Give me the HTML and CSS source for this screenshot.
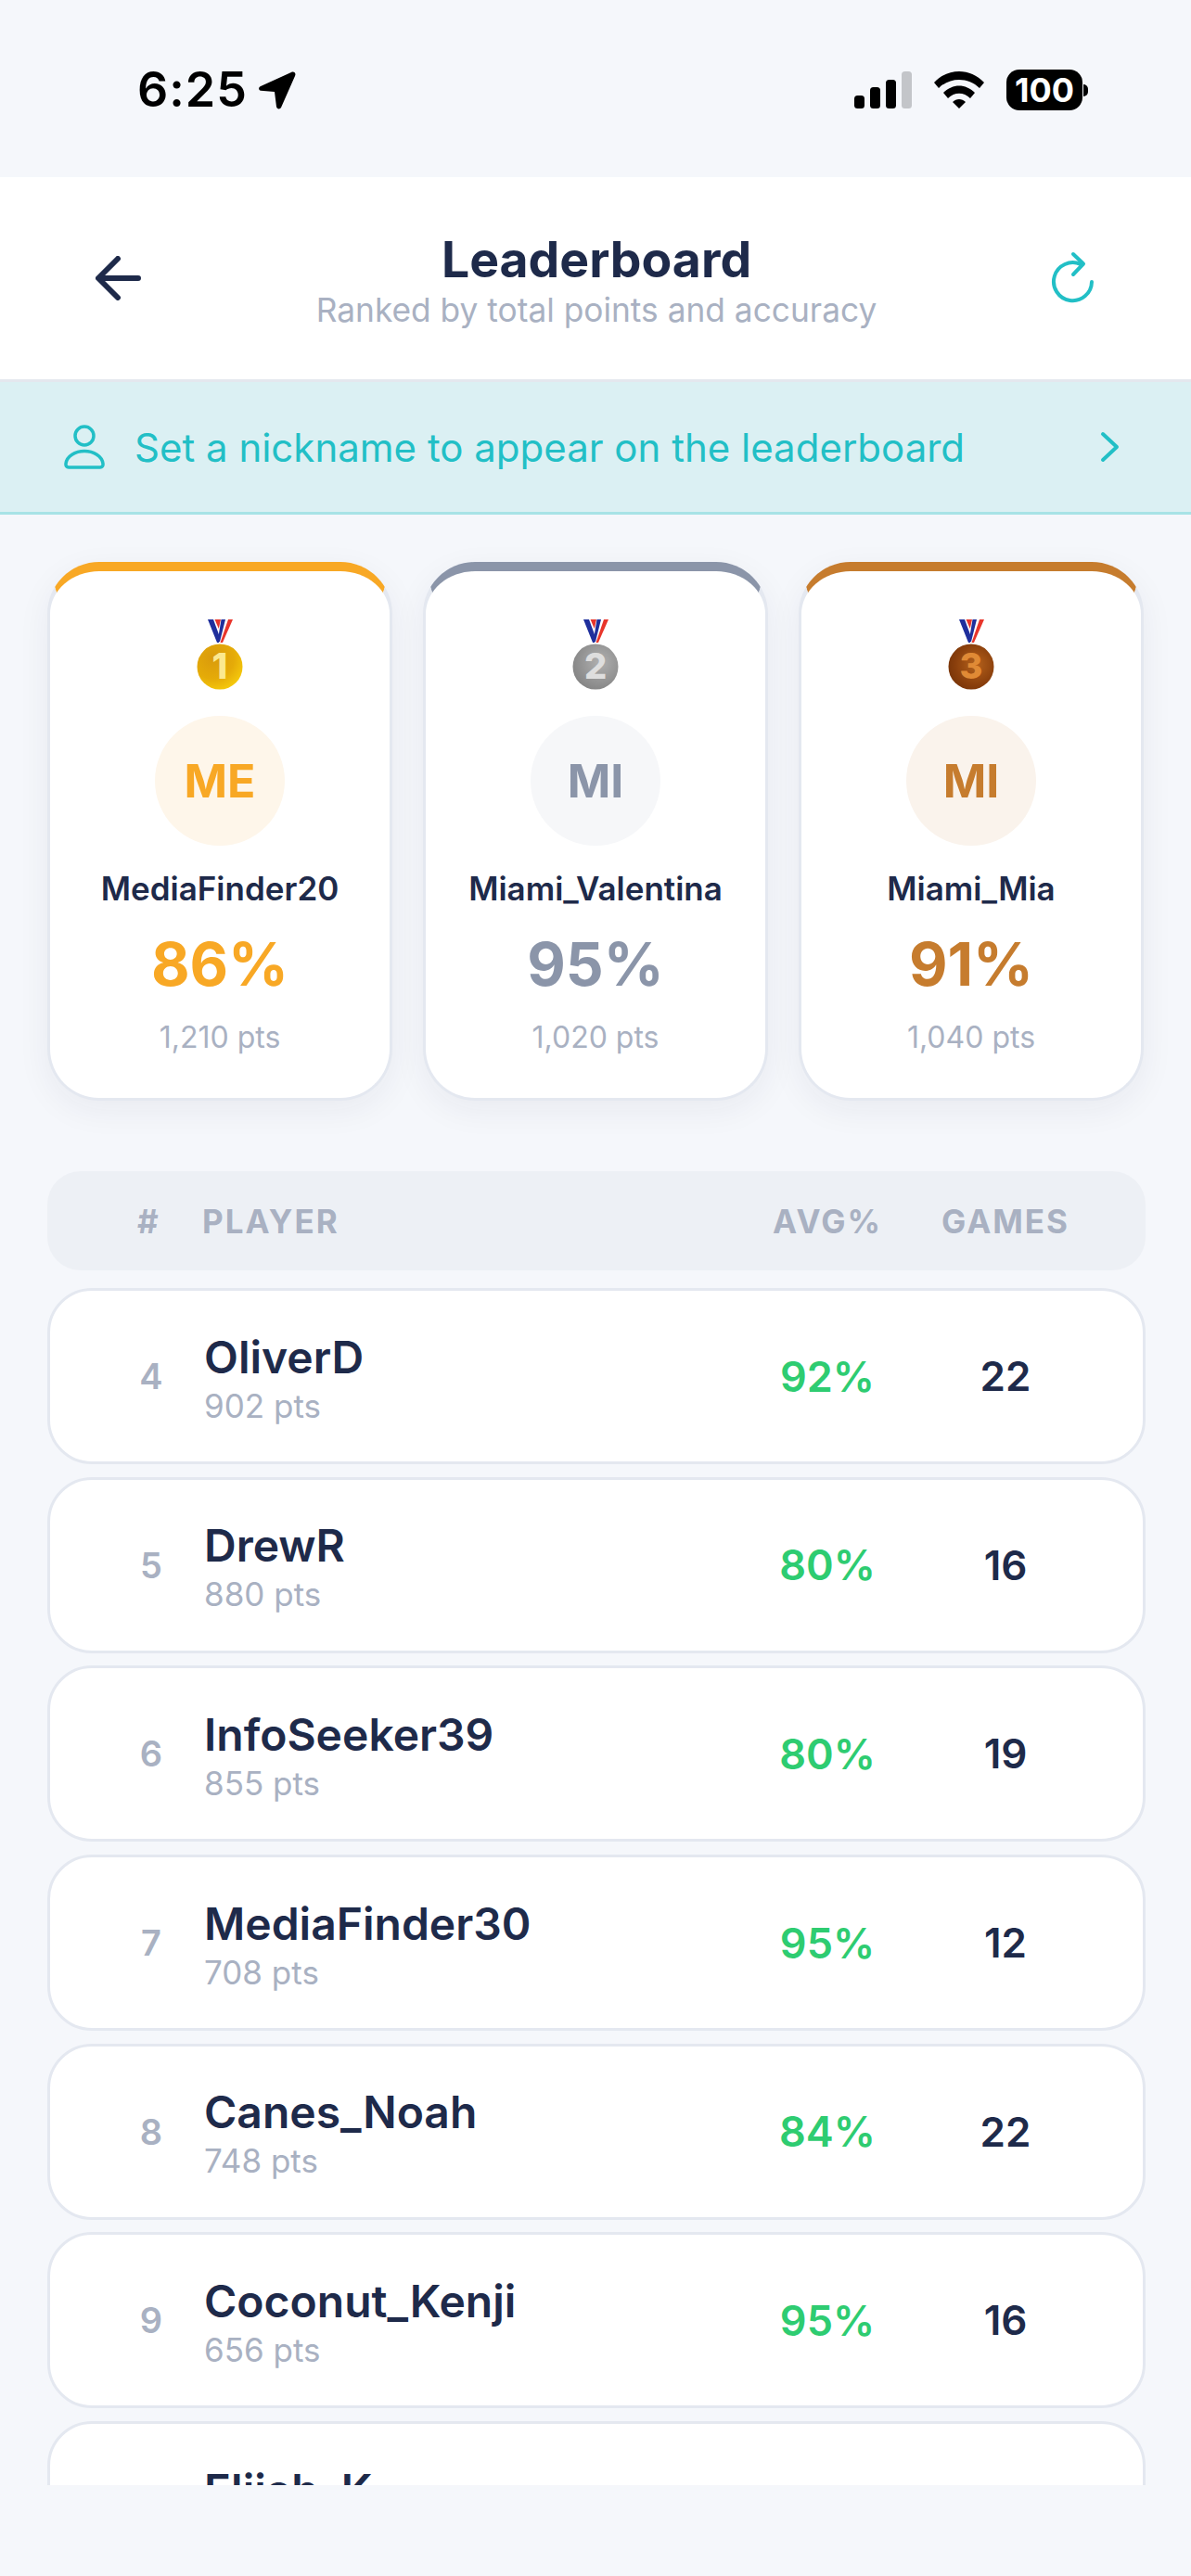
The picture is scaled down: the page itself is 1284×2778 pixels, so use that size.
FILE: index.html
```html
<!DOCTYPE html>
<html lang="en">
<head>
<meta charset="utf-8">
<title>Leaderboard</title>
<link rel="stylesheet" href="styles.css">
</head>
<body>
<svg class="defs" width="0" height="0" aria-hidden="true">
  <defs>
    <radialGradient id="gold" cx="35%" cy="30%" r="85%"><stop offset="0" stop-color="#d99a0c"/><stop offset=".55" stop-color="#e5ab08"/><stop offset="1" stop-color="#fbd40e"/></radialGradient>
    <radialGradient id="silver" cx="60%" cy="40%" r="75%"><stop offset="0" stop-color="#b0b0b0"/><stop offset=".6" stop-color="#929292"/><stop offset="1" stop-color="#7d7d7d"/></radialGradient>
    <radialGradient id="bronze" cx="60%" cy="45%" r="75%"><stop offset="0" stop-color="#b5621c"/><stop offset=".6" stop-color="#8a3f0c"/><stop offset="1" stop-color="#6e2f07"/></radialGradient>
    <g id="ribbon">
      <path d="M12 0h27L27 25h-4z" fill="#fff"/>
      <path d="M12 0h6l7 19-1 6h-2z" fill="#1f2f9c"/>
      <path d="M31 0h-4.500L22.500 24h2.500z" fill="#1f2f9c"/>
      <path d="M19.500 0h6.500l-2.200 10z" fill="#e8352b"/>
      <path d="M39 0h-5L25.500 25h2.500z" fill="#e8352b"/>
    </g>
  </defs>
</svg>
<div class="status">
  <div class="status-left">
    <span class="time">6:25</span>
    <svg class="loc" viewBox="0 0 42 42"><path d="M37 2 4 17c-3 1.500-2 4.500 0 4.700L19 23l2 16c.5 3 4 3 5 1L41 6c1.500-3-1-5.500-4-4z" fill="#000"/></svg>
  </div>
  <div class="status-right">
    <svg class="signal" viewBox="0 0 62 40"><rect x="0" y="26" width="11" height="14" rx="3.500"/><rect x="17" y="17" width="11" height="23" rx="3.500"/><rect x="34" y="9" width="11" height="31" rx="3.500"/><rect x="51" y="0" width="11" height="40" rx="3.500" fill="#c3c5c9"/></svg>
    <svg class="wifi" viewBox="0 0 54 40"><path d="M0 12C15-4 39-4 54 12l-5 6C37 6 17 6 5 18z"/><path d="M10 23c10-10 24-10 34 0l-5 6c-7-7-17-7-24 0z"/><path d="M20 33c4-4 10-4 14 0l-7 7z"/></svg>
    <div class="battery"><span class="bat-body">100</span><span class="bat-cap"></span></div>
  </div>
</div>

<header class="topbar">
  <svg class="back" viewBox="0 0 50 48"><path d="M46 24H4M24 3 3 24l21 21" fill="none" stroke="#1e2a4a" stroke-width="6" stroke-linecap="round" stroke-linejoin="round"/></svg>
  <div class="titles">
    <div class="title">Leaderboard</div>
    <div class="subtitle">Ranked by total points and accuracy</div>
  </div>
  <svg class="refresh" viewBox="0 0 48 58"><path d="M44 33A20.500 20.500 0 1 1 32 14" fill="none" stroke="#22bfc6" stroke-width="4" stroke-linecap="round"/><path d="M24 3 35 13.500 24 25" fill="none" stroke="#22bfc6" stroke-width="4" stroke-linecap="round" stroke-linejoin="round"/></svg>
</header>

<div class="banner">
  <svg class="person" viewBox="0 0 44 48"><circle cx="22" cy="12" r="10" fill="none" stroke="#22bfc6" stroke-width="3.500"/><path d="M2 42c1-8 10-13.500 20-13.500S41 34 42 42c.3 2.500-1 4-3 4H5c-2 0-3.300-1.500-3-4z" fill="none" stroke="#22bfc6" stroke-width="3.500" stroke-linejoin="round"/></svg>
  <span class="banner-text">Set a nickname to appear on the leaderboard</span>
  <svg class="chev" viewBox="0 0 22 34"><path d="M3 3l15 14L3 31" fill="none" stroke="#22bfc6" stroke-width="4" stroke-linecap="round" stroke-linejoin="round"/></svg>
</div>

<main class="content">
  <section class="podium">
    <article class="card gold">
      <svg class="medal" viewBox="0 0 50 76"><use href="#ribbon"/><circle cx="25" cy="51" r="24.500" fill="url(#gold)"/><text x="25" y="64" class="medal-num medal-n1">1</text></svg>
      <div class="avatar">ME</div>
      <div class="card-name">MediaFinder20</div>
      <div class="card-pct">86%</div>
      <div class="card-pts">1,210 pts</div>
    </article>
    <article class="card silver">
      <svg class="medal" viewBox="0 0 50 76"><use href="#ribbon"/><circle cx="25" cy="51" r="24.500" fill="url(#silver)"/><text x="25" y="64" class="medal-num medal-n2">2</text></svg>
      <div class="avatar">MI</div>
      <div class="card-name">Miami_Valentina</div>
      <div class="card-pct">95%</div>
      <div class="card-pts">1,020 pts</div>
    </article>
    <article class="card bronze">
      <svg class="medal" viewBox="0 0 50 76"><use href="#ribbon"/><circle cx="25" cy="51" r="24.500" fill="url(#bronze)"/><text x="25" y="64" class="medal-num medal-n3">3</text></svg>
      <div class="avatar">MI</div>
      <div class="card-name">Miami_Mia</div>
      <div class="card-pct">91%</div>
      <div class="card-pts">1,040 pts</div>
    </article>
  </section>

  <div class="thead">
    <span class="th-rank">#</span>
    <span class="th-player">PLAYER</span>
    <span class="th-avg">AVG%</span>
    <span class="th-games">GAMES</span>
  </div>

  <div class="rows">
    <div class="row"><span class="rank">4</span><div class="who"><div class="name">OliverD</div><div class="pts">902 pts</div></div><span class="avg">92%</span><span class="games">22</span></div>
    <div class="row"><span class="rank">5</span><div class="who"><div class="name">DrewR</div><div class="pts">880 pts</div></div><span class="avg">80%</span><span class="games">16</span></div>
    <div class="row"><span class="rank">6</span><div class="who"><div class="name">InfoSeeker39</div><div class="pts">855 pts</div></div><span class="avg">80%</span><span class="games">19</span></div>
    <div class="row"><span class="rank">7</span><div class="who"><div class="name">MediaFinder30</div><div class="pts">708 pts</div></div><span class="avg">95%</span><span class="games">12</span></div>
    <div class="row"><span class="rank">8</span><div class="who"><div class="name">Canes_Noah</div><div class="pts">748 pts</div></div><span class="avg">84%</span><span class="games">22</span></div>
    <div class="row"><span class="rank">9</span><div class="who"><div class="name">Coconut_Kenji</div><div class="pts">656 pts</div></div><span class="avg">95%</span><span class="games">16</span></div>
    <div class="row"><span class="rank"></span><div class="who"><div class="name">Elijah_K</div><div class="pts">&nbsp;</div></div></div>
  </div>
</main>
</body>
</html>
```
FILE: styles.css
```css
* { box-sizing: border-box; }
html, body { margin: 0; padding: 0; }
body {
  width: 1284px;
  height: 2778px;
  overflow: hidden;
  background: #f5f7fb;
  font-family: Inter, "Noto Sans", sans-serif;
  color: #1e2a4a;
}
.defs { display: block; height: 0; }

.status {
  height: 191px;
  display: flex;
  justify-content: space-between;
  align-items: flex-start;
  padding: 72px 111px 0 148px;
}
.status-left { display: flex; align-items: center; gap: 10px; height: 50px; }
.time { font-size: 52px; line-height: 50px; font-weight: 600; color: #000; letter-spacing: 1px; }
.loc { width: 42px; height: 42px; }
.status-right { display: flex; align-items: center; gap: 24px; height: 50px; }
.signal { width: 62px; height: 40px; fill: #000; }
.wifi { width: 54px; height: 40px; fill: #000; }
.battery { display: flex; align-items: center; gap: 1px; }
.bat-body {
  width: 82px; height: 44px; border-radius: 14px; background: #000; color: #fff;
  font-size: 36px; line-height: 44px; font-weight: 700; text-align: center;
}
.bat-cap { width: 5px; height: 13px; background: #000; border-radius: 0 6px 6px 0; }

.topbar {
  height: 221px;
  background: #fff;
  border-bottom: 3px solid #e4e7ee;
  display: flex;
  align-items: center;
  padding: 0 103px;
  justify-content: space-between;
}
.back { width: 50px; height: 48px; }
.refresh { width: 48px; height: 58px; }
.titles { text-align: center; padding-top: 4px; }
.title { font-size: 53.500px; line-height: 66px; font-weight: 700; color: #1e2a4a; }
.subtitle { font-size: 35.300px; line-height: 44px; color: #a9b1c2; }

.banner {
  height: 143px;
  background: #dbf0f3;
  border-bottom: 3px solid #a7e3e6;
  display: flex;
  align-items: center;
  padding: 0 76px 0 69px;
  color: #22bfc6;
}
.person { width: 44px; height: 48px; margin-right: 32px; }
.banner-text { font-size: 42px; font-weight: 400; flex: 1; white-space: nowrap; }
.chev { width: 22px; height: 34px; }

.content { height: calc(2680px - 555px); overflow: hidden; }

.podium {
  display: grid;
  grid-template-columns: repeat(3, 372px);
  column-gap: 33px;
  padding: 51px 0 0 51px;
}
.card {
  height: 581px;
  background: #fff;
  border: 3px solid #e4e8f0;
  border-top-width: 10px;
  border-radius: 56px;
  box-shadow: 0 10px 36px rgba(30, 42, 74, .06);
  display: flex;
  flex-direction: column;
  align-items: center;
  padding-top: 52px;
}
.gold { border-top-color: #f8a825; --c: #f8a825; --a: #fef6ea; }
.silver { border-top-color: #8b95a9; --c: #8b95a9; --a: #f6f7f9; }
.bronze { border-top-color: #c67c2e; --c: #c67c2e; --a: #faf3ec; }
.medal { width: 50px; height: 76px; display: block; }
.medal-num { font-size: 38px; font-weight: 800; text-anchor: middle; font-family: Inter, sans-serif; }
.medal-n1 { fill: #fbe88f; }
.medal-n2 { fill: #dedede; }
.medal-n3 { fill: #e08a35; }
.avatar {
  width: 140px; height: 140px; border-radius: 50%;
  margin-top: 28px;
  background: var(--a); color: var(--c);
  font-size: 50px; font-weight: 700; line-height: 140px; text-align: center;
}
.card-name { margin-top: 24px; font-size: 35px; line-height: 44px; font-weight: 600; color: #1e2a4a; white-space: nowrap; }
.card-pct { margin-top: 21px; font-size: 64px; line-height: 78px; font-weight: 700; color: var(--c); }
.card-pts { margin-top: 20px; font-size: 32px; line-height: 40px; color: #a9b1c2; }

.thead {
  margin: 76px 49px 0 51px;
  height: 107px;
  border-radius: 36px;
  background: #edf0f5;
  display: flex;
  align-items: center;
  font-size: 35px;
  font-weight: 700;
  letter-spacing: 2px;
  color: #a9b1c2;
}
.th-rank { width: 167px; padding-left: 97px; }
.th-player { flex: 1; }
.th-avg { width: 140px; text-align: center; }
.th-games { width: 140px; margin-left: 52px; margin-right: 81px; text-align: center; }

.rows { display: flex; flex-direction: column; gap: 13.700px; margin: 19px 49px 0 51px; }
.row {
  height: 190px;
  flex: none;
  background: #fff;
  border: 3px solid #e4e8f0;
  border-radius: 48px;
  display: flex;
  align-items: center;
  padding: 0 83px 0 70px;
}
.rank { width: 78px; margin-right: 18px; text-align: center; font-size: 38px; font-weight: 600; color: #a9b1c2; }
.who { flex: 1; padding-top: 3px; }
.name { font-size: 48px; line-height: 60px; font-weight: 600; color: #1e2a4a; }
.pts { font-size: 35px; line-height: 44px; color: #a9b1c2; }
.avg { width: 140px; text-align: center; font-size: 45px; font-weight: 600; color: #2ecc71; }
.games { width: 130px; margin-left: 57px; text-align: center; font-size: 44px; font-weight: 600; color: #1e2a4a; }
```
